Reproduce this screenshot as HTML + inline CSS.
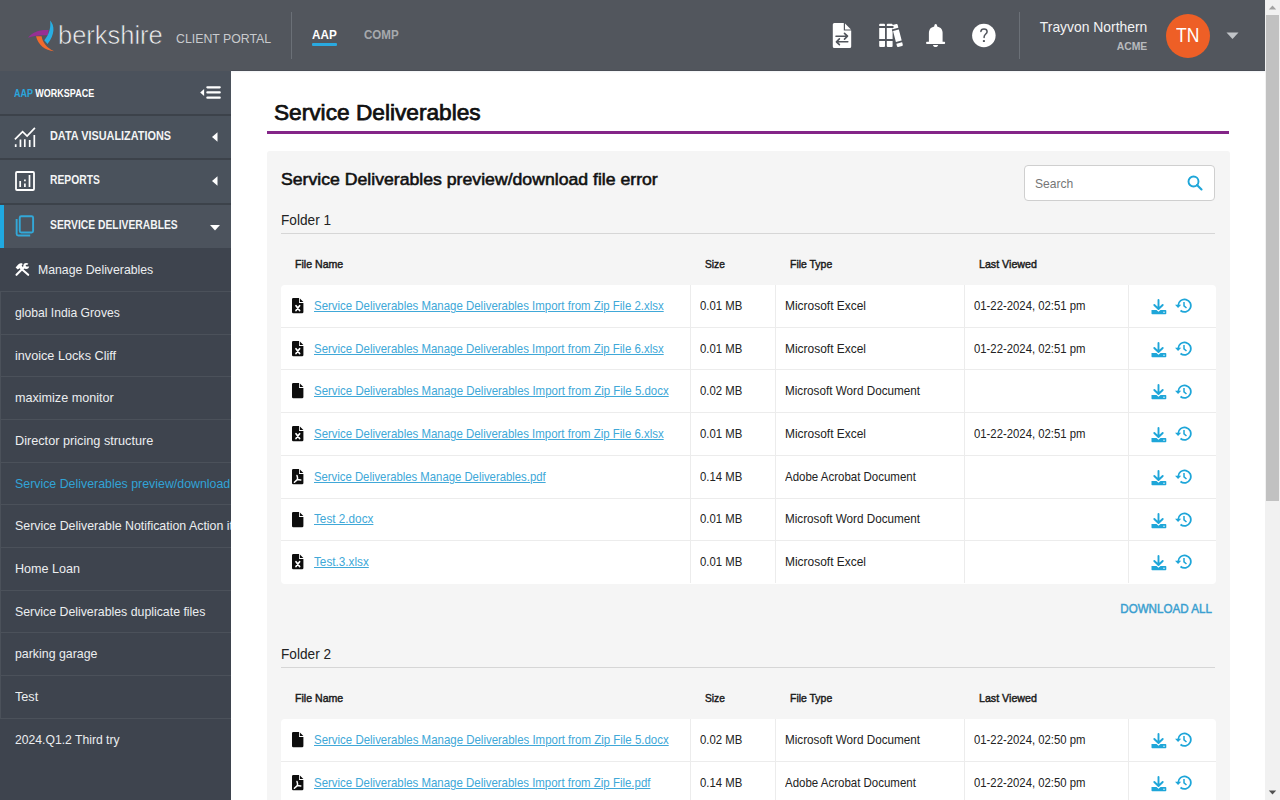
<!DOCTYPE html>
<html><head><meta charset="utf-8"><title>Service Deliverables</title>
<style>
html,body{margin:0;padding:0;width:1280px;height:800px;overflow:hidden;background:#fff}
body{position:relative;font-family:"Liberation Sans",sans-serif}
.t{position:absolute;white-space:nowrap;line-height:1}
</style></head><body>
<div style="position:absolute;left:0;top:0;width:1265px;height:71px;background:#52565d"></div><div style="position:absolute;left:231px;top:70px;width:1034px;height:1px;background:#4a4e56"></div><svg style="position:absolute;left:26px;top:19px" width="32" height="36" viewBox="0 0 32 36">
<path d="M2 18.8 C6 13 14 10.5 22.6 11 L22 16.3 C14 15.8 7 16.5 2 18.8Z" fill="#962f94"/>
<path d="M24 1.5 C28.8 6 29.2 15.5 21.5 25 L18.3 21.3 C23.2 15.5 25.2 8 24 1.5Z" fill="#28aee3"/>
<path d="M10 17.2 L15.6 17.2 C16.6 23.6 20.6 28.6 28.2 32.3 C19 31.3 12 25.8 10 17.2Z" fill="#f26a2c"/>
</svg><div class="t" style="left:57.5px;top:23.02px;font-size:25.6px;color:#f0f1f2;font-weight:400;letter-spacing:0px;transform:scaleX(0.9949);transform-origin:0 0;-webkit-text-stroke:0.6px #52565d;">berkshire</div><div class="t" style="left:176px;top:31.77px;font-size:13.5px;color:#c9cbce;font-weight:400;letter-spacing:0px;transform:scaleX(0.9122);transform-origin:0 0;">CLIENT PORTAL</div><div style="position:absolute;left:291px;top:12px;width:1px;height:47px;background:#6b7077"></div><div class="t" style="left:312px;top:27.99px;font-size:13px;color:#ffffff;font-weight:700;letter-spacing:0px;transform:scaleX(0.9);transform-origin:0 0;">AAP</div><div style="position:absolute;left:312px;top:43px;width:25px;height:3px;background:#29a9e0;border-radius:1px"></div><div class="t" style="left:364px;top:27.99px;font-size:13px;color:#a6a9ad;font-weight:700;letter-spacing:0px;transform:scaleX(0.8899);transform-origin:0 0;">COMP</div><svg style="position:absolute;left:829px;top:20px" width="26" height="32" viewBox="0 0 26 32">
<path d="M5.3 3 H14.8 V10.6 H22.2 V26.5 A1.5 1.5 0 0 1 20.7 28 H5.3 A1.5 1.5 0 0 1 3.8 26.5 V4.5 A1.5 1.5 0 0 1 5.3 3Z" fill="#fff"/>
<path d="M16 3.4 L22 9.4 H16Z" fill="#fff"/>
<path d="M7 16.2 H18.3 M15.5 13.3 L18.5 16.2 L15.5 19.1 M18.8 21.8 H7.5 M10.4 18.9 L7.4 21.8 L10.4 24.7" stroke="#52565d" stroke-width="1.6" fill="none" stroke-linecap="round" stroke-linejoin="round"/>
</svg><svg style="position:absolute;left:875px;top:20px" width="32" height="32" viewBox="0 0 32 32">
<rect x="4.2" y="3.8" width="5.8" height="23.2" rx="1" fill="#fff"/>
<rect x="11.8" y="3.8" width="5.8" height="23.2" rx="1" fill="#fff"/>
<g transform="rotate(-14.5 22.3 15.5)"><rect x="19.3" y="4.2" width="6" height="22.6" rx="1" fill="#fff"/>
<path d="M18.5 9.2 H26 M18.5 22.3 H26" stroke="#52565d" stroke-width="1.8"/></g>
<path d="M3 6.9 H18.5 M3 19.9 H18.5" stroke="#52565d" stroke-width="2"/>
</svg><svg style="position:absolute;left:922px;top:20px" width="28" height="30" viewBox="0 0 28 30">
<path d="M12.2 7 C12.2 5 12.7 3.9 13.7 3.9 C14.7 3.9 15.2 5 15.2 7Z" fill="#fff"/>
<path d="M6.9 22.2 V12.8 C6.9 8.6 9.8 6.4 13.75 6.4 C17.7 6.4 20.6 8.6 20.6 12.8 V22.2Z" fill="#fff"/>
<rect x="4.1" y="21.75" width="19" height="2.25" rx="0.8" fill="#fff"/>
<path d="M11 24.9 H16.1 C15.8 26.3 14.9 27 13.55 27 C12.2 27 11.3 26.3 11 24.9Z" fill="#fff"/>
</svg><svg style="position:absolute;left:968px;top:20px" width="30" height="30" viewBox="0 0 30 30">
<circle cx="15.85" cy="15.5" r="11.75" fill="#fff"/>
<path d="M12.9 11.6 C12.9 9.9 14.3 9 16 9 C17.8 9 19.1 10.1 19.1 11.7 C19.1 13.9 16.1 14.3 16.1 17 V17.6" stroke="#52565d" stroke-width="1.5" fill="none" stroke-linecap="round"/>
<rect x="14.9" y="20.1" width="2" height="1.9" fill="#52565d"/>
</svg><div style="position:absolute;left:1019px;top:12px;width:1px;height:47px;background:#6b7077"></div><div class="t" style="right:132.5px;top:19.72px;font-size:14.5px;color:#f2f3f4;font-weight:400;letter-spacing:0px;transform:scaleX(0.9571);transform-origin:100% 0;">Trayvon Northern</div><div class="t" style="right:132.5px;top:41.13px;font-size:11.3px;color:#b8babd;font-weight:700;letter-spacing:0px;transform:scaleX(0.9191);transform-origin:100% 0;">ACME</div><div style="position:absolute;left:1165.5px;top:13.8px;width:44px;height:44px;border-radius:50%;background:#ee5f26"></div><div class="t" style="left:1176px;top:26.09px;font-size:19.5px;color:#ffffff;font-weight:400;letter-spacing:0px;transform:scaleX(0.8992);transform-origin:0 0;">TN</div><svg style="position:absolute;left:1226px;top:32px" width="13" height="8" viewBox="0 0 13 8"><path d="M0.5 0.5 H12.5 L6.5 7Z" fill="#c1c4c8"/></svg><div style="position:absolute;left:1265px;top:0;width:15px;height:800px;background:#f1f1f1"></div><div style="position:absolute;left:1266px;top:15px;width:12.5px;height:486px;background:#c1c1c1"></div><svg style="position:absolute;left:1265px;top:0" width="15" height="15"><path d="M3.8 9.5 H11.2 L7.5 5.5Z" fill="#a3a3a3"/></svg><svg style="position:absolute;left:1265px;top:785px" width="15" height="15"><path d="M3.8 5.5 H11.2 L7.5 9.5Z" fill="#505050"/></svg><div style="position:absolute;left:0;top:71px;width:231px;height:729px;background:#3e444e"></div><div style="position:absolute;left:0;top:71px;width:231px;height:43px;background:#4b525c"></div><div class="t" style="left:14px;top:88.59px;font-size:10.4px;color:#ffffff;font-weight:700;letter-spacing:0px;transform:scaleX(0.8662);transform-origin:0 0;"><span style="color:#2aa6dc">AAP</span> WORKSPACE</div><svg style="position:absolute;left:196px;top:80px" width="30" height="24" viewBox="0 0 30 24">
<path d="M4.2 12.45 L8.1 9 V15.9Z" fill="#fff"/>
<path d="M11.4 7.35 H23.7 M11.4 12.45 H23.7 M11.4 17.7 H23.7" stroke="#fff" stroke-width="2.3" stroke-linecap="round"/>
</svg><div style="position:absolute;left:0;top:114px;width:231px;height:134px;background:#3c424a"></div><div style="position:absolute;left:0;top:116px;width:231px;height:42px;background:#4a525c"></div><div class="t" style="left:50px;top:130.37px;font-size:12.2px;color:#f3f4f5;font-weight:700;letter-spacing:0px;transform:scaleX(0.8922);transform-origin:0 0;">DATA VISUALIZATIONS</div><svg style="position:absolute;left:211px;top:131px" width="8" height="12"><path d="M1 6 L6.5 1.2 V10.8Z" fill="#fff"/></svg><div style="position:absolute;left:0;top:160px;width:231px;height:43px;background:#4a525c"></div><div class="t" style="left:50px;top:174.37px;font-size:12.2px;color:#f3f4f5;font-weight:700;letter-spacing:0px;transform:scaleX(0.8455);transform-origin:0 0;">REPORTS</div><svg style="position:absolute;left:211px;top:175px" width="8" height="12"><path d="M1 6 L6.5 1.2 V10.8Z" fill="#fff"/></svg><div style="position:absolute;left:0;top:205px;width:231px;height:43px;background:#4c535d"></div><div class="t" style="left:50px;top:219.37px;font-size:12.2px;color:#f3f4f5;font-weight:700;letter-spacing:0px;transform:scaleX(0.8469);transform-origin:0 0;">SERVICE DELIVERABLES</div><svg style="position:absolute;left:209px;top:224px" width="12" height="8"><path d="M1 1 H11 L6 6.5Z" fill="#fff"/></svg><div style="position:absolute;left:0;top:204.7px;width:4px;height:43.3px;background:#1fa9e1"></div><svg style="position:absolute;left:12px;top:124px" width="26" height="26" viewBox="0 0 26 26">
<path d="M2.9 15.3 L10.6 7.6 L15.1 12 L22.9 3.9" stroke="#fff" stroke-width="1.7" fill="none"/>
<path d="M3.7 20.2 V23 M8.45 15.6 V23 M12.8 15.3 V23 M17.7 15.9 V23 M22.3 11 V23" stroke="#fff" stroke-width="1.7" fill="none"/>
</svg><svg style="position:absolute;left:12px;top:168px" width="26" height="26" viewBox="0 0 26 26">
<rect x="4" y="4" width="18" height="18" rx="1" stroke="#fff" stroke-width="1.8" fill="none"/>
<path d="M8.2 13 V19 M12.9 15.6 V19 M12.9 11.5 V13.3 M17.5 7 V19" stroke="#fff" stroke-width="1.7"/>
</svg><svg style="position:absolute;left:12px;top:212px" width="26" height="28" viewBox="0 0 26 28">
<rect x="7.75" y="4.25" width="13.35" height="16.3" rx="1.5" stroke="#33a8d8" stroke-width="1.9" fill="none"/>
<path d="M4.65 7 V22 A1.6 1.6 0 0 0 6.25 23.55 H18.2" stroke="#33a8d8" stroke-width="1.9" fill="none"/>
</svg><div style="position:absolute;left:0;top:248px;width:231px;height:552px;overflow:hidden"><div style="position:absolute;left:0;top:0px;width:231px;height:44px;box-sizing:border-box;border-bottom:1px solid #4b515a;"></div><div class="t" style="left:37.5px;top:14.78px;font-size:13.6px;color:#eceef0;font-weight:400;letter-spacing:0px;transform:scaleX(0.9023);transform-origin:0 0;">Manage Deliverables</div><div style="position:absolute;left:0;top:44.0px;width:231px;height:42.68px;box-sizing:border-box;border-bottom:1px solid #4b515a;border-left:1px solid #4b515a;"></div><div class="t" style="left:15px;top:57.88px;font-size:13.6px;color:#eceef0;font-weight:400;letter-spacing:0px;transform:scaleX(0.8949);transform-origin:0 0;">global India Groves</div><div style="position:absolute;left:0;top:86.68px;width:231px;height:42.68px;box-sizing:border-box;border-bottom:1px solid #4b515a;border-left:1px solid #4b515a;"></div><div class="t" style="left:15px;top:100.56px;font-size:13.6px;color:#eceef0;font-weight:400;letter-spacing:0px;transform:scaleX(0.9313);transform-origin:0 0;">invoice Locks Cliff</div><div style="position:absolute;left:0;top:129.36px;width:231px;height:42.68px;box-sizing:border-box;border-bottom:1px solid #4b515a;border-left:1px solid #4b515a;"></div><div class="t" style="left:15px;top:143.24px;font-size:13.6px;color:#eceef0;font-weight:400;letter-spacing:0px;transform:scaleX(0.9263);transform-origin:0 0;">maximize monitor</div><div style="position:absolute;left:0;top:172.04px;width:231px;height:42.68px;box-sizing:border-box;border-bottom:1px solid #4b515a;border-left:1px solid #4b515a;"></div><div class="t" style="left:15px;top:185.92px;font-size:13.6px;color:#eceef0;font-weight:400;letter-spacing:0px;transform:scaleX(0.9338);transform-origin:0 0;">Director pricing structure</div><div style="position:absolute;left:0;top:214.72px;width:231px;height:42.68px;box-sizing:border-box;border-bottom:1px solid #4b515a;border-left:1px solid #4b515a;"></div><div class="t" style="left:15px;top:228.6px;font-size:13.6px;color:#31a3d6;font-weight:400;letter-spacing:0px;transform:scaleX(0.91);transform-origin:0 0;">Service Deliverables preview/download file error</div><div style="position:absolute;left:0;top:257.4px;width:231px;height:42.68px;box-sizing:border-box;border-bottom:1px solid #4b515a;border-left:1px solid #4b515a;"></div><div class="t" style="left:15px;top:271.28px;font-size:13.6px;color:#eceef0;font-weight:400;letter-spacing:0px;transform:scaleX(0.91);transform-origin:0 0;">Service Deliverable Notification Action item</div><div style="position:absolute;left:0;top:300.08px;width:231px;height:42.68px;box-sizing:border-box;border-bottom:1px solid #4b515a;border-left:1px solid #4b515a;"></div><div class="t" style="left:15px;top:313.96px;font-size:13.6px;color:#eceef0;font-weight:400;letter-spacing:0px;transform:scaleX(0.9255);transform-origin:0 0;">Home Loan</div><div style="position:absolute;left:0;top:342.76px;width:231px;height:42.68px;box-sizing:border-box;border-bottom:1px solid #4b515a;border-left:1px solid #4b515a;"></div><div class="t" style="left:15px;top:356.64px;font-size:13.6px;color:#eceef0;font-weight:400;letter-spacing:0px;transform:scaleX(0.9061);transform-origin:0 0;">Service Deliverables duplicate files</div><div style="position:absolute;left:0;top:385.44px;width:231px;height:42.68px;box-sizing:border-box;border-bottom:1px solid #4b515a;border-left:1px solid #4b515a;"></div><div class="t" style="left:15px;top:399.32px;font-size:13.6px;color:#eceef0;font-weight:400;letter-spacing:0px;transform:scaleX(0.9087);transform-origin:0 0;">parking garage</div><div style="position:absolute;left:0;top:428.12px;width:231px;height:42.68px;box-sizing:border-box;border-bottom:1px solid #4b515a;border-left:1px solid #4b515a;"></div><div class="t" style="left:15px;top:442.0px;font-size:13.6px;color:#eceef0;font-weight:400;letter-spacing:0px;transform:scaleX(0.9303);transform-origin:0 0;">Test</div><div style="position:absolute;left:0;top:470.8px;width:231px;height:42.68px;box-sizing:border-box;"></div><div class="t" style="left:15px;top:484.68px;font-size:13.6px;color:#eceef0;font-weight:400;letter-spacing:0px;transform:scaleX(0.895);transform-origin:0 0;">2024.Q1.2 Third try</div><svg style="position:absolute;left:13px;top:13px" width="18" height="18" viewBox="0 0 18 18">
<path d="M3.5 13.8 L11 6.3" stroke="#fff" stroke-width="2.1" stroke-linecap="round"/>
<path d="M9.5 8.8 L15.2 13.8" stroke="#fff" stroke-width="2.1" stroke-linecap="round"/>
<path d="M2.6 6.6 L5.2 3.6 C6.2 2.6 7.6 2.2 9.2 2.3 L9.6 3.4 L8.6 4.6 L10.2 6.4 L8 8.6 L6.6 7.2 L4.8 8.5Z" fill="#fff"/>
<circle cx="13.2" cy="5" r="2.9" fill="#fff"/>
<path d="M13.6 4.6 L15.6 2.6 L17 4 L15 6Z" fill="#3e434c"/>
<circle cx="13.6" cy="4.6" r="0.9" fill="#3e434c"/>
</svg></div><div style="position:absolute;left:231px;top:71px;width:1034px;height:729px;background:#fff"></div><div style="position:absolute;left:231px;top:71px;width:1034px;height:2px;background:linear-gradient(#f1f3f6,#fff)"></div><div class="t" style="left:273.5px;top:102.12px;font-size:22.3px;color:#111111;font-weight:400;letter-spacing:0px;transform:scaleX(1.0169);transform-origin:0 0;-webkit-text-stroke:0.75px #111111;">Service Deliverables</div><div style="position:absolute;left:267px;top:131px;width:962px;height:2.5px;background:#842588"></div><div style="position:absolute;left:267px;top:151px;width:963px;height:700px;background:#f5f5f5;border-radius:3px"></div><div class="t" style="left:281px;top:170.98px;font-size:16.2px;color:#111111;font-weight:400;letter-spacing:0px;transform:scaleX(1.0905);transform-origin:0 0;-webkit-text-stroke:0.55px #111111;">Service Deliverables preview/download file error</div><div style="position:absolute;left:1024px;top:165px;width:191px;height:36px;box-sizing:border-box;border:1px solid #cfcfcf;border-radius:4px;background:#fff"></div><div class="t" style="left:1035px;top:176.82px;font-size:13.2px;color:#767676;font-weight:400;letter-spacing:0px;transform:scaleX(0.9168);transform-origin:0 0;">Search</div><svg style="position:absolute;left:1186px;top:174px" width="18" height="18" viewBox="0 0 18 18">
<circle cx="7.5" cy="7.5" r="5" stroke="#1ea6d9" stroke-width="1.9" fill="none"/>
<path d="M11 11 L15.5 15.5" stroke="#1ea6d9" stroke-width="2.1" stroke-linecap="round"/>
</svg><div class="t" style="left:281px;top:213.04px;font-size:14.6px;color:#222222;font-weight:400;letter-spacing:0px;transform:scaleX(0.9348);transform-origin:0 0;">Folder 1</div><div style="position:absolute;left:281px;top:233px;width:934px;height:1px;background:#d6d6d6"></div><div class="t" style="left:295px;top:258.82px;font-size:11.2px;color:#1b1b1b;font-weight:400;letter-spacing:0px;transform:scaleX(0.9457);transform-origin:0 0;-webkit-text-stroke:0.45px #1b1b1b;">File Name</div><div class="t" style="left:704.5px;top:258.82px;font-size:11.2px;color:#1b1b1b;font-weight:400;letter-spacing:0px;transform:scaleX(0.9145);transform-origin:0 0;-webkit-text-stroke:0.45px #1b1b1b;">Size</div><div class="t" style="left:790px;top:258.82px;font-size:11.2px;color:#1b1b1b;font-weight:400;letter-spacing:0px;transform:scaleX(0.9343);transform-origin:0 0;-webkit-text-stroke:0.45px #1b1b1b;">File Type</div><div class="t" style="left:978.8px;top:258.82px;font-size:11.2px;color:#1b1b1b;font-weight:400;letter-spacing:0px;transform:scaleX(0.9534);transform-origin:0 0;-webkit-text-stroke:0.45px #1b1b1b;">Last Viewed</div><div style="position:absolute;left:281px;top:285px;width:934.5px;height:298.97px;background:#fff;border-radius:4px"></div><div style="position:absolute;left:690.0px;top:285.0px;width:1px;height:41.71px;background:#ececec"></div><div style="position:absolute;left:775.0px;top:285.0px;width:1px;height:41.71px;background:#ececec"></div><div style="position:absolute;left:964.0px;top:285.0px;width:1px;height:41.71px;background:#ececec"></div><div style="position:absolute;left:1128.0px;top:285.0px;width:1px;height:41.71px;background:#ececec"></div><svg style="position:absolute;left:291.5px;top:298.0px" width="12" height="16" viewBox="0 0 12 16"><path d="M1.3 0 H7.05 V4.95 H11.4 V13.9 A1.3 1.3 0 0 1 10.1 15.2 H1.3 A1.3 1.3 0 0 1 0 13.9 V1.3 A1.3 1.3 0 0 1 1.3 0Z" fill="#0d0d0d"/><path d="M7.85 0.45 L11.35 3.95 H7.85Z" fill="#0d0d0d"/><path d="M4 7.7 L7.6 12.6 M7.6 7.7 L4 12.6" stroke="#fff" stroke-width="1.7" stroke-linecap="round"/></svg><div class="t" style="left:314px;top:299.87px;font-size:12.2px;color:#40a8d8;font-weight:400;letter-spacing:0px;transform:scaleX(0.9387);transform-origin:0 0;text-decoration:underline;text-underline-offset:1px;text-decoration-thickness:1px;">Service Deliverables Manage Deliverables Import from Zip File 2.xlsx</div><div class="t" style="left:700px;top:299.87px;font-size:12.2px;color:#222222;font-weight:400;letter-spacing:0px;transform:scaleX(0.9324);transform-origin:0 0;">0.01 MB</div><div class="t" style="left:785px;top:299.87px;font-size:12.2px;color:#222222;font-weight:400;letter-spacing:0px;transform:scaleX(0.98);transform-origin:0 0;">Microsoft Excel</div><div class="t" style="left:974px;top:299.87px;font-size:12.2px;color:#222222;font-weight:400;letter-spacing:0px;transform:scaleX(0.9292);transform-origin:0 0;">01-22-2024, 02:51 pm</div><svg style="position:absolute;left:1151px;top:299.0px" width="16" height="16" viewBox="0 0 16 16">
<path d="M7.5 1 V9.5 M3.3 6 L7.5 10 L11.7 6" stroke="#1ea6d9" stroke-width="1.9" fill="none" stroke-linecap="round" stroke-linejoin="round"/>
<path d="M0.5 11 H5.5 L7.5 12.8 L9.5 11 H14.5 A0.8 0.8 0 0 1 15.3 11.8 V14.6 A0.8 0.8 0 0 1 14.5 15.3 H1.3 A0.8 0.8 0 0 1 0.5 14.5Z" fill="#1ea6d9"/>
<circle cx="13" cy="13.2" r="0.7" fill="#fff"/>
</svg><svg style="position:absolute;left:1174.3px;top:297.2px" width="18" height="17" viewBox="0 0 18 17">
<path d="M4.2 8.5 A6.3 6.3 0 1 1 6.5 13.5" stroke="#1ea6d9" stroke-width="1.8" fill="none"/>
<path d="M1 7.8 H7.2 L4.1 11Z" fill="#1ea6d9"/>
<path d="M10 5 V8.8 L12.5 11" stroke="#1ea6d9" stroke-width="1.5" fill="none"/>
</svg><div style="position:absolute;left:281px;top:326.71px;width:934.5px;height:1px;background:#ececec"></div><div style="position:absolute;left:690.0px;top:327.71px;width:1px;height:41.71px;background:#ececec"></div><div style="position:absolute;left:775.0px;top:327.71px;width:1px;height:41.71px;background:#ececec"></div><div style="position:absolute;left:964.0px;top:327.71px;width:1px;height:41.71px;background:#ececec"></div><div style="position:absolute;left:1128.0px;top:327.71px;width:1px;height:41.71px;background:#ececec"></div><svg style="position:absolute;left:291.5px;top:340.71px" width="12" height="16" viewBox="0 0 12 16"><path d="M1.3 0 H7.05 V4.95 H11.4 V13.9 A1.3 1.3 0 0 1 10.1 15.2 H1.3 A1.3 1.3 0 0 1 0 13.9 V1.3 A1.3 1.3 0 0 1 1.3 0Z" fill="#0d0d0d"/><path d="M7.85 0.45 L11.35 3.95 H7.85Z" fill="#0d0d0d"/><path d="M4 7.7 L7.6 12.6 M7.6 7.7 L4 12.6" stroke="#fff" stroke-width="1.7" stroke-linecap="round"/></svg><div class="t" style="left:314px;top:342.58px;font-size:12.2px;color:#40a8d8;font-weight:400;letter-spacing:0px;transform:scaleX(0.9387);transform-origin:0 0;text-decoration:underline;text-underline-offset:1px;text-decoration-thickness:1px;">Service Deliverables Manage Deliverables Import from Zip File 6.xlsx</div><div class="t" style="left:700px;top:342.58px;font-size:12.2px;color:#222222;font-weight:400;letter-spacing:0px;transform:scaleX(0.9324);transform-origin:0 0;">0.01 MB</div><div class="t" style="left:785px;top:342.58px;font-size:12.2px;color:#222222;font-weight:400;letter-spacing:0px;transform:scaleX(0.98);transform-origin:0 0;">Microsoft Excel</div><div class="t" style="left:974px;top:342.58px;font-size:12.2px;color:#222222;font-weight:400;letter-spacing:0px;transform:scaleX(0.9292);transform-origin:0 0;">01-22-2024, 02:51 pm</div><svg style="position:absolute;left:1151px;top:341.71px" width="16" height="16" viewBox="0 0 16 16">
<path d="M7.5 1 V9.5 M3.3 6 L7.5 10 L11.7 6" stroke="#1ea6d9" stroke-width="1.9" fill="none" stroke-linecap="round" stroke-linejoin="round"/>
<path d="M0.5 11 H5.5 L7.5 12.8 L9.5 11 H14.5 A0.8 0.8 0 0 1 15.3 11.8 V14.6 A0.8 0.8 0 0 1 14.5 15.3 H1.3 A0.8 0.8 0 0 1 0.5 14.5Z" fill="#1ea6d9"/>
<circle cx="13" cy="13.2" r="0.7" fill="#fff"/>
</svg><svg style="position:absolute;left:1174.3px;top:339.91px" width="18" height="17" viewBox="0 0 18 17">
<path d="M4.2 8.5 A6.3 6.3 0 1 1 6.5 13.5" stroke="#1ea6d9" stroke-width="1.8" fill="none"/>
<path d="M1 7.8 H7.2 L4.1 11Z" fill="#1ea6d9"/>
<path d="M10 5 V8.8 L12.5 11" stroke="#1ea6d9" stroke-width="1.5" fill="none"/>
</svg><div style="position:absolute;left:281px;top:369.42px;width:934.5px;height:1px;background:#ececec"></div><div style="position:absolute;left:690.0px;top:370.42px;width:1px;height:41.71px;background:#ececec"></div><div style="position:absolute;left:775.0px;top:370.42px;width:1px;height:41.71px;background:#ececec"></div><div style="position:absolute;left:964.0px;top:370.42px;width:1px;height:41.71px;background:#ececec"></div><div style="position:absolute;left:1128.0px;top:370.42px;width:1px;height:41.71px;background:#ececec"></div><svg style="position:absolute;left:291.5px;top:383.42px" width="12" height="16" viewBox="0 0 12 16"><path d="M1.3 0 H7.05 V4.95 H11.4 V13.9 A1.3 1.3 0 0 1 10.1 15.2 H1.3 A1.3 1.3 0 0 1 0 13.9 V1.3 A1.3 1.3 0 0 1 1.3 0Z" fill="#0d0d0d"/><path d="M7.85 0.45 L11.35 3.95 H7.85Z" fill="#0d0d0d"/></svg><div class="t" style="left:314px;top:385.29px;font-size:12.2px;color:#40a8d8;font-weight:400;letter-spacing:0px;transform:scaleX(0.9401);transform-origin:0 0;text-decoration:underline;text-underline-offset:1px;text-decoration-thickness:1px;">Service Deliverables Manage Deliverables Import from Zip File 5.docx</div><div class="t" style="left:700px;top:385.29px;font-size:12.2px;color:#222222;font-weight:400;letter-spacing:0px;transform:scaleX(0.9324);transform-origin:0 0;">0.02 MB</div><div class="t" style="left:785px;top:385.29px;font-size:12.2px;color:#222222;font-weight:400;letter-spacing:0px;transform:scaleX(0.9603);transform-origin:0 0;">Microsoft Word Document</div><svg style="position:absolute;left:1151px;top:384.42px" width="16" height="16" viewBox="0 0 16 16">
<path d="M7.5 1 V9.5 M3.3 6 L7.5 10 L11.7 6" stroke="#1ea6d9" stroke-width="1.9" fill="none" stroke-linecap="round" stroke-linejoin="round"/>
<path d="M0.5 11 H5.5 L7.5 12.8 L9.5 11 H14.5 A0.8 0.8 0 0 1 15.3 11.8 V14.6 A0.8 0.8 0 0 1 14.5 15.3 H1.3 A0.8 0.8 0 0 1 0.5 14.5Z" fill="#1ea6d9"/>
<circle cx="13" cy="13.2" r="0.7" fill="#fff"/>
</svg><svg style="position:absolute;left:1174.3px;top:382.62px" width="18" height="17" viewBox="0 0 18 17">
<path d="M4.2 8.5 A6.3 6.3 0 1 1 6.5 13.5" stroke="#1ea6d9" stroke-width="1.8" fill="none"/>
<path d="M1 7.8 H7.2 L4.1 11Z" fill="#1ea6d9"/>
<path d="M10 5 V8.8 L12.5 11" stroke="#1ea6d9" stroke-width="1.5" fill="none"/>
</svg><div style="position:absolute;left:281px;top:412.13px;width:934.5px;height:1px;background:#ececec"></div><div style="position:absolute;left:690.0px;top:413.13px;width:1px;height:41.71px;background:#ececec"></div><div style="position:absolute;left:775.0px;top:413.13px;width:1px;height:41.71px;background:#ececec"></div><div style="position:absolute;left:964.0px;top:413.13px;width:1px;height:41.71px;background:#ececec"></div><div style="position:absolute;left:1128.0px;top:413.13px;width:1px;height:41.71px;background:#ececec"></div><svg style="position:absolute;left:291.5px;top:426.13px" width="12" height="16" viewBox="0 0 12 16"><path d="M1.3 0 H7.05 V4.95 H11.4 V13.9 A1.3 1.3 0 0 1 10.1 15.2 H1.3 A1.3 1.3 0 0 1 0 13.9 V1.3 A1.3 1.3 0 0 1 1.3 0Z" fill="#0d0d0d"/><path d="M7.85 0.45 L11.35 3.95 H7.85Z" fill="#0d0d0d"/><path d="M4 7.7 L7.6 12.6 M7.6 7.7 L4 12.6" stroke="#fff" stroke-width="1.7" stroke-linecap="round"/></svg><div class="t" style="left:314px;top:428.0px;font-size:12.2px;color:#40a8d8;font-weight:400;letter-spacing:0px;transform:scaleX(0.9387);transform-origin:0 0;text-decoration:underline;text-underline-offset:1px;text-decoration-thickness:1px;">Service Deliverables Manage Deliverables Import from Zip File 6.xlsx</div><div class="t" style="left:700px;top:428.0px;font-size:12.2px;color:#222222;font-weight:400;letter-spacing:0px;transform:scaleX(0.9324);transform-origin:0 0;">0.01 MB</div><div class="t" style="left:785px;top:428.0px;font-size:12.2px;color:#222222;font-weight:400;letter-spacing:0px;transform:scaleX(0.98);transform-origin:0 0;">Microsoft Excel</div><div class="t" style="left:974px;top:428.0px;font-size:12.2px;color:#222222;font-weight:400;letter-spacing:0px;transform:scaleX(0.9292);transform-origin:0 0;">01-22-2024, 02:51 pm</div><svg style="position:absolute;left:1151px;top:427.13px" width="16" height="16" viewBox="0 0 16 16">
<path d="M7.5 1 V9.5 M3.3 6 L7.5 10 L11.7 6" stroke="#1ea6d9" stroke-width="1.9" fill="none" stroke-linecap="round" stroke-linejoin="round"/>
<path d="M0.5 11 H5.5 L7.5 12.8 L9.5 11 H14.5 A0.8 0.8 0 0 1 15.3 11.8 V14.6 A0.8 0.8 0 0 1 14.5 15.3 H1.3 A0.8 0.8 0 0 1 0.5 14.5Z" fill="#1ea6d9"/>
<circle cx="13" cy="13.2" r="0.7" fill="#fff"/>
</svg><svg style="position:absolute;left:1174.3px;top:425.33px" width="18" height="17" viewBox="0 0 18 17">
<path d="M4.2 8.5 A6.3 6.3 0 1 1 6.5 13.5" stroke="#1ea6d9" stroke-width="1.8" fill="none"/>
<path d="M1 7.8 H7.2 L4.1 11Z" fill="#1ea6d9"/>
<path d="M10 5 V8.8 L12.5 11" stroke="#1ea6d9" stroke-width="1.5" fill="none"/>
</svg><div style="position:absolute;left:281px;top:454.84px;width:934.5px;height:1px;background:#ececec"></div><div style="position:absolute;left:690.0px;top:455.84px;width:1px;height:41.71px;background:#ececec"></div><div style="position:absolute;left:775.0px;top:455.84px;width:1px;height:41.71px;background:#ececec"></div><div style="position:absolute;left:964.0px;top:455.84px;width:1px;height:41.71px;background:#ececec"></div><div style="position:absolute;left:1128.0px;top:455.84px;width:1px;height:41.71px;background:#ececec"></div><svg style="position:absolute;left:291.5px;top:468.84px" width="12" height="16" viewBox="0 0 12 16"><path d="M1.3 0 H7.05 V4.95 H11.4 V13.9 A1.3 1.3 0 0 1 10.1 15.2 H1.3 A1.3 1.3 0 0 1 0 13.9 V1.3 A1.3 1.3 0 0 1 1.3 0Z" fill="#0d0d0d"/><path d="M7.85 0.45 L11.35 3.95 H7.85Z" fill="#0d0d0d"/><path d="M5 6.4 C5.6 8 5.7 9.5 5.3 10.6 L2.4 13.3 M5.3 10.6 L8.8 10.9" stroke="#fff" stroke-width="1.5" fill="none" stroke-linecap="round" stroke-linejoin="round"/></svg><div class="t" style="left:314px;top:470.71px;font-size:12.2px;color:#40a8d8;font-weight:400;letter-spacing:0px;transform:scaleX(0.9292);transform-origin:0 0;text-decoration:underline;text-underline-offset:1px;text-decoration-thickness:1px;">Service Deliverables Manage Deliverables.pdf</div><div class="t" style="left:700px;top:470.71px;font-size:12.2px;color:#222222;font-weight:400;letter-spacing:0px;transform:scaleX(0.9324);transform-origin:0 0;">0.14 MB</div><div class="t" style="left:785px;top:470.71px;font-size:12.2px;color:#222222;font-weight:400;letter-spacing:0px;transform:scaleX(0.9424);transform-origin:0 0;">Adobe Acrobat Document</div><svg style="position:absolute;left:1151px;top:469.84px" width="16" height="16" viewBox="0 0 16 16">
<path d="M7.5 1 V9.5 M3.3 6 L7.5 10 L11.7 6" stroke="#1ea6d9" stroke-width="1.9" fill="none" stroke-linecap="round" stroke-linejoin="round"/>
<path d="M0.5 11 H5.5 L7.5 12.8 L9.5 11 H14.5 A0.8 0.8 0 0 1 15.3 11.8 V14.6 A0.8 0.8 0 0 1 14.5 15.3 H1.3 A0.8 0.8 0 0 1 0.5 14.5Z" fill="#1ea6d9"/>
<circle cx="13" cy="13.2" r="0.7" fill="#fff"/>
</svg><svg style="position:absolute;left:1174.3px;top:468.04px" width="18" height="17" viewBox="0 0 18 17">
<path d="M4.2 8.5 A6.3 6.3 0 1 1 6.5 13.5" stroke="#1ea6d9" stroke-width="1.8" fill="none"/>
<path d="M1 7.8 H7.2 L4.1 11Z" fill="#1ea6d9"/>
<path d="M10 5 V8.8 L12.5 11" stroke="#1ea6d9" stroke-width="1.5" fill="none"/>
</svg><div style="position:absolute;left:281px;top:497.55px;width:934.5px;height:1px;background:#ececec"></div><div style="position:absolute;left:690.0px;top:498.55px;width:1px;height:41.71px;background:#ececec"></div><div style="position:absolute;left:775.0px;top:498.55px;width:1px;height:41.71px;background:#ececec"></div><div style="position:absolute;left:964.0px;top:498.55px;width:1px;height:41.71px;background:#ececec"></div><div style="position:absolute;left:1128.0px;top:498.55px;width:1px;height:41.71px;background:#ececec"></div><svg style="position:absolute;left:291.5px;top:511.55px" width="12" height="16" viewBox="0 0 12 16"><path d="M1.3 0 H7.05 V4.95 H11.4 V13.9 A1.3 1.3 0 0 1 10.1 15.2 H1.3 A1.3 1.3 0 0 1 0 13.9 V1.3 A1.3 1.3 0 0 1 1.3 0Z" fill="#0d0d0d"/><path d="M7.85 0.45 L11.35 3.95 H7.85Z" fill="#0d0d0d"/></svg><div class="t" style="left:314px;top:513.42px;font-size:12.2px;color:#40a8d8;font-weight:400;letter-spacing:0px;transform:scaleX(0.9634);transform-origin:0 0;text-decoration:underline;text-underline-offset:1px;text-decoration-thickness:1px;">Test 2.docx</div><div class="t" style="left:700px;top:513.42px;font-size:12.2px;color:#222222;font-weight:400;letter-spacing:0px;transform:scaleX(0.9324);transform-origin:0 0;">0.01 MB</div><div class="t" style="left:785px;top:513.42px;font-size:12.2px;color:#222222;font-weight:400;letter-spacing:0px;transform:scaleX(0.9603);transform-origin:0 0;">Microsoft Word Document</div><svg style="position:absolute;left:1151px;top:512.55px" width="16" height="16" viewBox="0 0 16 16">
<path d="M7.5 1 V9.5 M3.3 6 L7.5 10 L11.7 6" stroke="#1ea6d9" stroke-width="1.9" fill="none" stroke-linecap="round" stroke-linejoin="round"/>
<path d="M0.5 11 H5.5 L7.5 12.8 L9.5 11 H14.5 A0.8 0.8 0 0 1 15.3 11.8 V14.6 A0.8 0.8 0 0 1 14.5 15.3 H1.3 A0.8 0.8 0 0 1 0.5 14.5Z" fill="#1ea6d9"/>
<circle cx="13" cy="13.2" r="0.7" fill="#fff"/>
</svg><svg style="position:absolute;left:1174.3px;top:510.75px" width="18" height="17" viewBox="0 0 18 17">
<path d="M4.2 8.5 A6.3 6.3 0 1 1 6.5 13.5" stroke="#1ea6d9" stroke-width="1.8" fill="none"/>
<path d="M1 7.8 H7.2 L4.1 11Z" fill="#1ea6d9"/>
<path d="M10 5 V8.8 L12.5 11" stroke="#1ea6d9" stroke-width="1.5" fill="none"/>
</svg><div style="position:absolute;left:281px;top:540.26px;width:934.5px;height:1px;background:#ececec"></div><div style="position:absolute;left:690.0px;top:541.26px;width:1px;height:41.71px;background:#ececec"></div><div style="position:absolute;left:775.0px;top:541.26px;width:1px;height:41.71px;background:#ececec"></div><div style="position:absolute;left:964.0px;top:541.26px;width:1px;height:41.71px;background:#ececec"></div><div style="position:absolute;left:1128.0px;top:541.26px;width:1px;height:41.71px;background:#ececec"></div><svg style="position:absolute;left:291.5px;top:554.26px" width="12" height="16" viewBox="0 0 12 16"><path d="M1.3 0 H7.05 V4.95 H11.4 V13.9 A1.3 1.3 0 0 1 10.1 15.2 H1.3 A1.3 1.3 0 0 1 0 13.9 V1.3 A1.3 1.3 0 0 1 1.3 0Z" fill="#0d0d0d"/><path d="M7.85 0.45 L11.35 3.95 H7.85Z" fill="#0d0d0d"/><path d="M4 7.7 L7.6 12.6 M7.6 7.7 L4 12.6" stroke="#fff" stroke-width="1.7" stroke-linecap="round"/></svg><div class="t" style="left:314px;top:556.13px;font-size:12.2px;color:#40a8d8;font-weight:400;letter-spacing:0px;transform:scaleX(0.9631);transform-origin:0 0;text-decoration:underline;text-underline-offset:1px;text-decoration-thickness:1px;">Test.3.xlsx</div><div class="t" style="left:700px;top:556.13px;font-size:12.2px;color:#222222;font-weight:400;letter-spacing:0px;transform:scaleX(0.9324);transform-origin:0 0;">0.01 MB</div><div class="t" style="left:785px;top:556.13px;font-size:12.2px;color:#222222;font-weight:400;letter-spacing:0px;transform:scaleX(0.98);transform-origin:0 0;">Microsoft Excel</div><svg style="position:absolute;left:1151px;top:555.26px" width="16" height="16" viewBox="0 0 16 16">
<path d="M7.5 1 V9.5 M3.3 6 L7.5 10 L11.7 6" stroke="#1ea6d9" stroke-width="1.9" fill="none" stroke-linecap="round" stroke-linejoin="round"/>
<path d="M0.5 11 H5.5 L7.5 12.8 L9.5 11 H14.5 A0.8 0.8 0 0 1 15.3 11.8 V14.6 A0.8 0.8 0 0 1 14.5 15.3 H1.3 A0.8 0.8 0 0 1 0.5 14.5Z" fill="#1ea6d9"/>
<circle cx="13" cy="13.2" r="0.7" fill="#fff"/>
</svg><svg style="position:absolute;left:1174.3px;top:553.46px" width="18" height="17" viewBox="0 0 18 17">
<path d="M4.2 8.5 A6.3 6.3 0 1 1 6.5 13.5" stroke="#1ea6d9" stroke-width="1.8" fill="none"/>
<path d="M1 7.8 H7.2 L4.1 11Z" fill="#1ea6d9"/>
<path d="M10 5 V8.8 L12.5 11" stroke="#1ea6d9" stroke-width="1.5" fill="none"/>
</svg><div class="t" style="right:68.5px;top:604.22px;font-size:11.9px;color:#3a9fd0;font-weight:400;letter-spacing:0px;transform:scaleX(0.976);transform-origin:100% 0;-webkit-text-stroke:0.45px #3a9fd0;">DOWNLOAD ALL</div><div class="t" style="left:281px;top:647.04px;font-size:14.6px;color:#222222;font-weight:400;letter-spacing:0px;transform:scaleX(0.9348);transform-origin:0 0;">Folder 2</div><div style="position:absolute;left:281px;top:667px;width:934px;height:1px;background:#d6d6d6"></div><div class="t" style="left:295px;top:692.82px;font-size:11.2px;color:#1b1b1b;font-weight:400;letter-spacing:0px;transform:scaleX(0.9457);transform-origin:0 0;-webkit-text-stroke:0.45px #1b1b1b;">File Name</div><div class="t" style="left:704.5px;top:692.82px;font-size:11.2px;color:#1b1b1b;font-weight:400;letter-spacing:0px;transform:scaleX(0.9145);transform-origin:0 0;-webkit-text-stroke:0.45px #1b1b1b;">Size</div><div class="t" style="left:790px;top:692.82px;font-size:11.2px;color:#1b1b1b;font-weight:400;letter-spacing:0px;transform:scaleX(0.9343);transform-origin:0 0;-webkit-text-stroke:0.45px #1b1b1b;">File Type</div><div class="t" style="left:978.8px;top:692.82px;font-size:11.2px;color:#1b1b1b;font-weight:400;letter-spacing:0px;transform:scaleX(0.9534);transform-origin:0 0;-webkit-text-stroke:0.45px #1b1b1b;">Last Viewed</div><div style="position:absolute;left:281px;top:719px;width:934.5px;height:85.42px;background:#fff;border-radius:4px"></div><div style="position:absolute;left:690.0px;top:719.0px;width:1px;height:41.71px;background:#ececec"></div><div style="position:absolute;left:775.0px;top:719.0px;width:1px;height:41.71px;background:#ececec"></div><div style="position:absolute;left:964.0px;top:719.0px;width:1px;height:41.71px;background:#ececec"></div><div style="position:absolute;left:1128.0px;top:719.0px;width:1px;height:41.71px;background:#ececec"></div><svg style="position:absolute;left:291.5px;top:732.0px" width="12" height="16" viewBox="0 0 12 16"><path d="M1.3 0 H7.05 V4.95 H11.4 V13.9 A1.3 1.3 0 0 1 10.1 15.2 H1.3 A1.3 1.3 0 0 1 0 13.9 V1.3 A1.3 1.3 0 0 1 1.3 0Z" fill="#0d0d0d"/><path d="M7.85 0.45 L11.35 3.95 H7.85Z" fill="#0d0d0d"/></svg><div class="t" style="left:314px;top:733.87px;font-size:12.2px;color:#40a8d8;font-weight:400;letter-spacing:0px;transform:scaleX(0.9401);transform-origin:0 0;text-decoration:underline;text-underline-offset:1px;text-decoration-thickness:1px;">Service Deliverables Manage Deliverables Import from Zip File 5.docx</div><div class="t" style="left:700px;top:733.87px;font-size:12.2px;color:#222222;font-weight:400;letter-spacing:0px;transform:scaleX(0.9324);transform-origin:0 0;">0.02 MB</div><div class="t" style="left:785px;top:733.87px;font-size:12.2px;color:#222222;font-weight:400;letter-spacing:0px;transform:scaleX(0.9603);transform-origin:0 0;">Microsoft Word Document</div><div class="t" style="left:974px;top:733.87px;font-size:12.2px;color:#222222;font-weight:400;letter-spacing:0px;transform:scaleX(0.9292);transform-origin:0 0;">01-22-2024, 02:50 pm</div><svg style="position:absolute;left:1151px;top:733.0px" width="16" height="16" viewBox="0 0 16 16">
<path d="M7.5 1 V9.5 M3.3 6 L7.5 10 L11.7 6" stroke="#1ea6d9" stroke-width="1.9" fill="none" stroke-linecap="round" stroke-linejoin="round"/>
<path d="M0.5 11 H5.5 L7.5 12.8 L9.5 11 H14.5 A0.8 0.8 0 0 1 15.3 11.8 V14.6 A0.8 0.8 0 0 1 14.5 15.3 H1.3 A0.8 0.8 0 0 1 0.5 14.5Z" fill="#1ea6d9"/>
<circle cx="13" cy="13.2" r="0.7" fill="#fff"/>
</svg><svg style="position:absolute;left:1174.3px;top:731.2px" width="18" height="17" viewBox="0 0 18 17">
<path d="M4.2 8.5 A6.3 6.3 0 1 1 6.5 13.5" stroke="#1ea6d9" stroke-width="1.8" fill="none"/>
<path d="M1 7.8 H7.2 L4.1 11Z" fill="#1ea6d9"/>
<path d="M10 5 V8.8 L12.5 11" stroke="#1ea6d9" stroke-width="1.5" fill="none"/>
</svg><div style="position:absolute;left:281px;top:760.71px;width:934.5px;height:1px;background:#ececec"></div><div style="position:absolute;left:690.0px;top:761.71px;width:1px;height:41.71px;background:#ececec"></div><div style="position:absolute;left:775.0px;top:761.71px;width:1px;height:41.71px;background:#ececec"></div><div style="position:absolute;left:964.0px;top:761.71px;width:1px;height:41.71px;background:#ececec"></div><div style="position:absolute;left:1128.0px;top:761.71px;width:1px;height:41.71px;background:#ececec"></div><svg style="position:absolute;left:291.5px;top:774.71px" width="12" height="16" viewBox="0 0 12 16"><path d="M1.3 0 H7.05 V4.95 H11.4 V13.9 A1.3 1.3 0 0 1 10.1 15.2 H1.3 A1.3 1.3 0 0 1 0 13.9 V1.3 A1.3 1.3 0 0 1 1.3 0Z" fill="#0d0d0d"/><path d="M7.85 0.45 L11.35 3.95 H7.85Z" fill="#0d0d0d"/><path d="M5 6.4 C5.6 8 5.7 9.5 5.3 10.6 L2.4 13.3 M5.3 10.6 L8.8 10.9" stroke="#fff" stroke-width="1.5" fill="none" stroke-linecap="round" stroke-linejoin="round"/></svg><div class="t" style="left:314px;top:776.58px;font-size:12.2px;color:#40a8d8;font-weight:400;letter-spacing:0px;transform:scaleX(0.9389);transform-origin:0 0;text-decoration:underline;text-underline-offset:1px;text-decoration-thickness:1px;">Service Deliverables Manage Deliverables Import from Zip File.pdf</div><div class="t" style="left:700px;top:776.58px;font-size:12.2px;color:#222222;font-weight:400;letter-spacing:0px;transform:scaleX(0.9324);transform-origin:0 0;">0.14 MB</div><div class="t" style="left:785px;top:776.58px;font-size:12.2px;color:#222222;font-weight:400;letter-spacing:0px;transform:scaleX(0.9424);transform-origin:0 0;">Adobe Acrobat Document</div><div class="t" style="left:974px;top:776.58px;font-size:12.2px;color:#222222;font-weight:400;letter-spacing:0px;transform:scaleX(0.9292);transform-origin:0 0;">01-22-2024, 02:50 pm</div><svg style="position:absolute;left:1151px;top:775.71px" width="16" height="16" viewBox="0 0 16 16">
<path d="M7.5 1 V9.5 M3.3 6 L7.5 10 L11.7 6" stroke="#1ea6d9" stroke-width="1.9" fill="none" stroke-linecap="round" stroke-linejoin="round"/>
<path d="M0.5 11 H5.5 L7.5 12.8 L9.5 11 H14.5 A0.8 0.8 0 0 1 15.3 11.8 V14.6 A0.8 0.8 0 0 1 14.5 15.3 H1.3 A0.8 0.8 0 0 1 0.5 14.5Z" fill="#1ea6d9"/>
<circle cx="13" cy="13.2" r="0.7" fill="#fff"/>
</svg><svg style="position:absolute;left:1174.3px;top:773.91px" width="18" height="17" viewBox="0 0 18 17">
<path d="M4.2 8.5 A6.3 6.3 0 1 1 6.5 13.5" stroke="#1ea6d9" stroke-width="1.8" fill="none"/>
<path d="M1 7.8 H7.2 L4.1 11Z" fill="#1ea6d9"/>
<path d="M10 5 V8.8 L12.5 11" stroke="#1ea6d9" stroke-width="1.5" fill="none"/>
</svg>
</body></html>
